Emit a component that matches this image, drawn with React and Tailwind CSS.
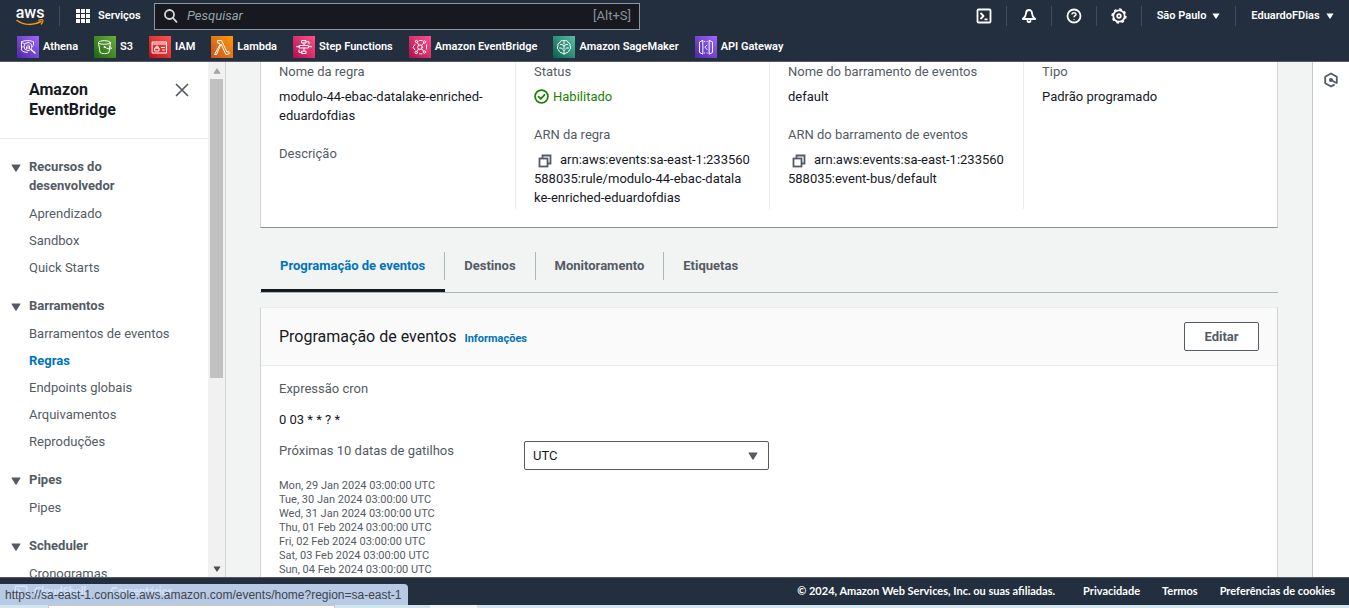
import React from "react";

const svgBase = {
  fill: "none",
  stroke: "currentColor",
  strokeWidth: 1,
  strokeLinecap: "round",
  strokeLinejoin: "round",
};

const services = [
  {
    name: "Athena",
    tile: "bg-linear-to-tr from-[#4d27a8] to-[#a166ff]",
    art: (
      <>
        <circle cx="11" cy="10.500" r="4" />
        <path d="M14 13.500l4 3.500" strokeWidth="1.600" />
        <path d="M9.500 11v1.500M11 9v3.500M12.500 10v2.500" />
        <path d="M4.500 6c1.500-2 10.500-2 12 0M4.500 6v8c1 1.700 3.500 2.500 6 2.300M16.500 6v3M4.500 6c.500.800 1.500 1.200 2.500 1.400M4.500 10c.500.700 1 .9 1.500 1" />
      </>
    ),
  },
  {
    name: "S3",
    tile: "bg-linear-to-tr from-[#1b660f] to-[#6cae3e]",
    art: (
      <>
        <ellipse cx="10.500" cy="6.500" rx="6" ry="1.800" />
        <path d="M4.500 6.500l1.500 10c1.500 1.500 7.500 1.500 9 0l1.500-10" />
        <path d="M10.500 11c3 2 6.500 2.500 7 1.500s-1.500-1.700-2.300-2" />
        <circle cx="10.500" cy="11" r="0.600" fill="currentColor" />
      </>
    ),
  },
  {
    name: "IAM",
    tile: "bg-linear-to-tr from-[#bd0816] to-[#ff5252]",
    art: (
      <>
        <rect x="3.500" y="6" width="14" height="11" />
        <path d="M3.500 8h14M12.500 11.500h3M13.500 14h2" />
        <rect x="6" y="12" width="4" height="3" />
        <path d="M7 12v-1a1 1 0 0 1 2 0v1" />
      </>
    ),
  },
  {
    name: "Lambda",
    tile: "bg-linear-to-tr from-[#c8511b] to-[#ff9900]",
    art: (
      <path d="M7 4.500h3.500l5.500 11.500 1.500-.5 1 2-3.500 1.200-5-10.700L5.500 18.500H3.500l5.500-10L8.300 7H7z" />
    ),
  },
  {
    name: "Step Functions",
    tile: "bg-linear-to-tr from-[#b0084d] to-[#ff4f8b]",
    art: (
      <>
        <rect x="9" y="4.500" width="4" height="2.500" />
        <rect x="6.500" y="9.500" width="9" height="2.500" />
        <rect x="9" y="15" width="4" height="2.500" />
        <path d="M11 7v2.500M11 12v3M9 16.300H6V14M13 5.800h3v2M3.500 10.700h3M15.500 10.700h3" />
      </>
    ),
  },
  {
    name: "Amazon EventBridge",
    tile: "bg-linear-to-tr from-[#b0084d] to-[#ff4f8b]",
    art: (
      <>
        <circle cx="11" cy="11.200" r="2.300" />
        <path d="M9.800 9L8.300 6.800M12.500 9.300l2-2M12.700 13l1.800 2M9.500 13.200L8 15.300" />
        <circle cx="7.500" cy="5.500" r="1.200" />
        <circle cx="15.500" cy="6" r="1.200" />
        <circle cx="15.500" cy="16" r="1.200" />
        <circle cx="7.300" cy="16.500" r="1.200" />
        <path d="M10.500 4.500h2.500M17.500 9v4M6 8.500l-2 2.700 2 2.800M10.500 17.800h2.500" />
      </>
    ),
  },
  {
    name: "Amazon SageMaker",
    tile: "bg-linear-to-tr from-[#055f4e] to-[#56c0a7]",
    art: (
      <>
        <path d="M11 4.500C8.500 3.800 7 5.300 7 6.500 5 7 4.500 8.700 5 10c-1 1.200-.800 3.200.700 4 .3 2 2 3 3.300 2.800.500.800 1.300 1.200 2 1.200s1.500-.4 2-1.200c1.300.2 3-.8 3.300-2.800 1.500-.8 1.700-2.800.7-4 .5-1.300 0-3-2-3.500 0-1.200-1.500-2.700-4-2z" />
        <path d="M11 4.500V8M11 14v4M7.500 8.500H9l2 1.500M14.500 8.500H13L11 10v2.500M6.500 12h2l2.500 2.500M15.500 12h-2l-1 1" />
      </>
    ),
  },
  {
    name: "API Gateway",
    tile: "bg-linear-to-tr from-[#4d27a8] to-[#a166ff]",
    art: (
      <>
        <path d="M7.500 4.500L4.500 6v10.500l3 1.500zM14.500 4.500l3 1.500v10.500l-3 1.500z" />
        <path d="M12 9l-2 2.200 2 2.300M9.500 5.500h.2M12 5.500h.2M9.500 17h.2M12 17h.2" />
      </>
    ),
  },
];

const navSections = [
  {
    title: "Recursos do desenvolvedor",
    items: ["Aprendizado", "Sandbox", "Quick Starts"],
  },
  {
    title: "Barramentos",
    items: [
      "Barramentos de eventos",
      "Regras",
      "Endpoints globais",
      "Arquivamentos",
      "Reproduções",
    ],
  },
  { title: "Pipes", items: ["Pipes"] },
  { title: "Scheduler", items: ["Cronogramas"] },
];

const triggerDates = [
  "Mon, 29 Jan 2024 03:00:00 UTC",
  "Tue, 30 Jan 2024 03:00:00 UTC",
  "Wed, 31 Jan 2024 03:00:00 UTC",
  "Thu, 01 Feb 2024 03:00:00 UTC",
  "Fri, 02 Feb 2024 03:00:00 UTC",
  "Sat, 03 Feb 2024 03:00:00 UTC",
  "Sun, 04 Feb 2024 03:00:00 UTC",
];

function Caret({ className }) {
  return (
    <svg viewBox="0 0 10 8" className={className} fill="currentColor" aria-hidden="true">
      <path d="M1 .5h8a.5.5 0 0 1 .4.8L5.500 7.400a.6.6 0 0 1-1 0L.6 1.300A.5.500 0 0 1 1 .5z" />
    </svg>
  );
}

function AwsLogo() {
  return (
    <a href="#" aria-label="AWS" className="flex w-7 flex-col items-center text-white">
      <span className="text-[16px] leading-[13px] font-medium">aws</span>
      <svg viewBox="0 0 28 7" className="h-[7px] w-7" fill="none" stroke="#f90" strokeLinecap="round">
        <path d="M1 1.500c7 5 17 5 24 1" strokeWidth="1.500" />
        <path d="M22.500 1.200c2-.6 4-.7 4.300-.2s-.2 2.500-1.500 4" strokeWidth="1.200" />
      </svg>
    </a>
  );
}

function TopButton({ label, children }) {
  return (
    <button type="button" aria-label={label} className="flex h-5 w-[45px] items-center justify-center border-r border-[#414d5c]">
      <svg viewBox="0 0 16 16" className="size-4" {...svgBase} strokeWidth="1.800">
        {children}
      </svg>
    </button>
  );
}

function Header() {
  return (
    <header className="shrink-0 border-b border-[#545b64] bg-[#232f3e] text-[11px] font-semibold text-white">
      <div className="flex h-8 items-center">
        <div className="flex h-5 items-center border-r border-[#414d5c] pr-[15px] pl-4">
          <AwsLogo />
        </div>
        <button type="button" className="ml-4 flex w-[78px] items-center gap-2">
          <svg viewBox="0 0 14 14" className="size-3.5 shrink-0" fill="currentColor" aria-hidden="true">
            {[0, 5, 10].map((y) =>
              [0, 5, 10].map((x) => <rect key={`${x}-${y}`} x={x} y={y} width="4" height="4" />)
            )}
          </svg>
          Serviços
        </button>
        <label className="flex h-[27px] w-[486px] items-center border border-[#8d9999] bg-[#16191f] px-2 font-normal">
          <svg viewBox="0 0 16 16" className="size-4 shrink-0 text-[#d5dbdb]" {...svgBase} strokeWidth="1.800">
            <circle cx="6.500" cy="6.500" r="4.500" />
            <path d="M10 10l3.500 3.800" />
          </svg>
          <input
            type="search"
            aria-label="Pesquisar"
            placeholder="Pesquisar"
            className="min-w-0 flex-1 bg-transparent px-2 text-[13px] outline-none placeholder:text-[#95a5a6] placeholder:italic"
          />
          <span className="text-[13px] text-[#879596]">[Alt+S]</span>
        </label>
        <div className="ml-auto flex items-center">
          <TopButton label="CloudShell">
            <rect x="1.500" y="1.500" width="13" height="13" rx="1" />
            <path d="M4.500 5l3 3-3 3M8.500 11.300h3" strokeLinecap="butt" />
          </TopButton>
          <TopButton label="Notificações">
            <path d="M8 2c-2 0-3 1.700-3 3.500 0 2.500-1 3.500-3.200 5.500h12.400C12 9 11 8 11 5.500 11 3.700 10 2 8 2z" />
            <path d="M6.500 13c.3 1.500 2.700 1.500 3 0" />
          </TopButton>
          <TopButton label="Ajuda">
            <circle cx="8" cy="8" r="6.500" />
            <path d="M6 6.500C6 3.900 10.200 4.300 10 6.500 9.900 7.800 8 7.700 8 9.300M8 11v.8" strokeWidth="1.500" strokeLinecap="butt" />
          </TopButton>
          <TopButton label="Configurações">
            <circle cx="8" cy="8" r="5.700" />
            <circle cx="8" cy="8" r="6.900" strokeWidth="1.500" strokeDasharray="2.700 2.700" strokeLinecap="butt" />
            <circle cx="8" cy="8" r="1.800" />
          </TopButton>
          <button type="button" className="flex h-5 w-[94px] items-center justify-center gap-1.5 border-r border-[#414d5c]">
            São Paulo
            <Caret className="h-1.5 w-2" />
          </button>
          <button type="button" className="flex h-5 w-[113px] items-center justify-center gap-1.5">
            EduardoFDias
            <Caret className="h-1.5 w-2" />
          </button>
        </div>
      </div>
      <nav aria-label="Favoritos" className="flex h-[29px] items-center gap-4 pt-px pl-[17px]">
        {services.map((s) => (
          <a key={s.name} href="#" className="flex items-center gap-1 whitespace-nowrap">
            <span className={`flex size-[22px] items-center justify-center ${s.tile}`}>
              <svg viewBox="0 0 22 22" className="size-[22px]" {...svgBase} aria-hidden="true">
                {s.art}
              </svg>
            </span>
            {s.name}
          </a>
        ))}
      </nav>
    </header>
  );
}

function Sidebar() {
  return (
    <aside className="flex w-[226px] shrink-0 border-r border-[#d0d4d4] bg-white">
      <div className="min-w-0 flex-1 overflow-hidden">
        <div className="flex items-start justify-between border-b border-[#eaeded] pt-[18px] pr-[18px] pb-[18px] pl-[29px]">
          <h2 className="w-28 text-[16px] leading-5 font-bold text-[#16191f]">Amazon EventBridge</h2>
          <button type="button" aria-label="Fechar" className="mt-0.5 text-[#545b64]">
            <svg viewBox="0 0 16 16" className="size-4" {...svgBase} strokeWidth="1.700">
              <path d="M2.500 2.500l11 11M13.500 2.500l-11 11" />
            </svg>
          </button>
        </div>
        <nav aria-label="Amazon EventBridge" className="flex flex-col gap-[19px] pt-[18px] text-[13px] leading-[19px] text-[#545b64]">
          {navSections.map((section) => (
            <section key={section.title}>
              <button type="button" className="flex w-full items-start gap-2 pr-14 pl-[11px] text-left font-bold">
                <Caret className="mt-[7px] h-2 w-2.5 shrink-0" />
                {section.title}
              </button>
              <ul className="mt-[9px] flex flex-col gap-2 pl-[29px]">
                {section.items.map((item) => (
                  <li key={item}>
                    <a href="#" className={item === "Regras" ? "font-bold text-[#0073bb]" : ""}>
                      {item}
                    </a>
                  </li>
                ))}
              </ul>
            </section>
          ))}
        </nav>
      </div>
      <div className="flex w-[17px] shrink-0 flex-col items-center bg-[#f1f1f1]" aria-hidden="true">
        <div className="flex h-[17px] items-center">
          <Caret className="h-1.5 w-2 rotate-180 text-[#a3a3a3]" />
        </div>
        <div className="h-[299px] w-[13px] bg-[#c1c1c1]" />
        <div className="mt-auto flex h-[17px] items-center">
          <Caret className="h-1.5 w-2 text-[#505050]" />
        </div>
      </div>
    </aside>
  );
}

function Field({ label, children }) {
  return (
    <div>
      <dt className="text-[#545b64]">{label}</dt>
      <dd className="mt-1.5 wrap-anywhere text-[#16191f]">{children}</dd>
    </div>
  );
}

function CopyButton() {
  return (
    <button type="button" aria-label="Copiar" className="mr-2 ml-1 inline-block align-middle text-[#545b64]">
      <svg viewBox="0 0 14 14" className="size-3.5" {...svgBase} strokeWidth="1.800" strokeLinejoin="miter">
        <rect x="1.500" y="4.500" width="8" height="8" />
        <path d="M4.500 4V1.500h8v8H10" />
      </svg>
    </button>
  );
}

function RuleDetails() {
  return (
    <section className="border-x border-b border-x-[#d0d4d4] border-b-[#879596] bg-white pb-[18px]">
      <dl className="grid grid-cols-4 text-[13px] leading-[19px]">
        <div className="flex min-h-[147px] flex-col gap-[19px] px-[18px]">
          <Field label="Nome da regra">modulo-44-ebac-datalake-enriched-eduardofdias</Field>
          <Field label="Descrição" />
        </div>
        <div className="flex flex-col gap-[19px] border-l border-[#eaeded] px-[18px]">
          <Field label="Status">
            <span className="flex items-center gap-1 text-[#1d8102]">
              <svg viewBox="0 0 16 16" className="size-[15px]" {...svgBase} strokeWidth="1.900">
                <circle cx="8" cy="8" r="6.800" />
                <path d="M4.800 8.200l2.400 2.300 4-4.300" />
              </svg>
              Habilitado
            </span>
          </Field>
          <Field label="ARN da regra">
            <CopyButton />
            arn:aws:events:sa-east-1:233560<wbr />588035:rule/modulo-44-ebac-datala<wbr />ke-enriched-eduardofdias
          </Field>
        </div>
        <div className="flex flex-col gap-[19px] border-l border-[#eaeded] px-[18px]">
          <Field label="Nome do barramento de eventos">default</Field>
          <Field label="ARN do barramento de eventos">
            <CopyButton />
            arn:aws:events:sa-east-1:233560<wbr />588035:event-bus/default
          </Field>
        </div>
        <div className="flex flex-col gap-[19px] border-l border-[#eaeded] px-[18px]">
          <Field label="Tipo">Padrão programado</Field>
        </div>
      </dl>
    </section>
  );
}

function Tabs() {
  const tabs = ["Programação de eventos", "Destinos", "Monitoramento", "Etiquetas"];
  return (
    <div role="tablist" className="mt-6 flex border-b border-[#aab7b8] pl-px text-[13px] font-bold">
      {tabs.map((tab, i) => (
        <button
          key={tab}
          type="button"
          role="tab"
          aria-selected={i === 0}
          className={
            i === 0
              ? "border-b-[3px] border-[#16191f] pb-[9px] text-[#0073bb]"
              : "border-b-[3px] border-transparent pb-[9px] text-[#545b64]"
          }
        >
          <span
            className={
              i === tabs.length - 1
                ? "flex h-7 items-center px-[19px]"
                : "flex h-7 items-center border-r border-[#aab7b8] px-[19px]"
            }
          >
            {tab}
          </span>
        </button>
      ))}
    </div>
  );
}

function Schedule() {
  return (
    <section className="mt-3.5 flex-1 border border-b-0 border-[#d0d4d4] border-t-[#eaeded] bg-white">
      <div className="flex h-[58px] items-center border-b border-[#eaeded] bg-[#fafafa] px-[18px]">
        <div className="flex items-baseline gap-2">
          <h2 className="text-[16px] text-[#16191f]">Programação de eventos</h2>
          <a href="#" className="text-[11px] font-bold text-[#0073bb]">
            Informações
          </a>
        </div>
        <button
          type="button"
          className="ml-auto h-[29px] w-[75px] rounded-xs border border-[#545b64] bg-white text-[13px] font-bold text-[#545b64]"
        >
          Editar
        </button>
      </div>
      <div className="px-[18px] pt-[13px] text-[13px] leading-[19px] text-[#545b64]">
        <p>Expressão cron</p>
        <p className="mt-3 text-[#16191f]">0 03 * * ? *</p>
        <div className="mt-3 grid grid-cols-4">
          <label htmlFor="timezone">Próximas 10 datas de gatilhos</label>
          <div className="flex h-[29px] items-center rounded-xs border border-[#545b64] bg-white pr-2.5">
            <select id="timezone" className="h-full min-w-0 flex-1 appearance-none px-2 text-[#16191f] outline-none">
              <option>UTC</option>
              <option>Local</option>
            </select>
            <Caret className="h-2 w-2.5 shrink-0" />
          </div>
        </div>
        <ul className="mt-[9px] text-[11px] leading-[14px]">
          {triggerDates.map((d) => (
            <li key={d}>{d}</li>
          ))}
        </ul>
      </div>
    </section>
  );
}

function Footer() {
  return (
    <footer className="relative flex h-7 shrink-0 items-center border-t border-[#545b64] bg-[#232f3e] pr-3.5 font-[Lato,sans-serif] text-[11px] font-bold text-white">
      <button type="button" className="ml-3.5 flex items-center gap-1.5">
        <svg viewBox="0 0 16 16" className="size-3.5" {...svgBase} strokeWidth="1.700">
          <rect x="1.500" y="1.500" width="13" height="13" rx="1" />
          <path d="M4.500 5l3 3-3 3" />
        </svg>
        CloudShell
      </button>
      <button type="button" className="ml-6">
        Comentários
      </button>
      <div className="ml-auto flex gap-x-[22px]">
        <span className="mr-1.5">© 2024, Amazon Web Services, Inc. ou suas afiliadas.</span>
        <a href="#">Privacidade</a>
        <a href="#">Termos</a>
        <a href="#">Preferências de cookies</a>
      </div>
      <div className="absolute bottom-0 left-0 flex h-[21px] items-center rounded-tr-sm bg-[#cfe0fc]/87 pr-1.5 pl-[5px] font-['Liberation_Sans',sans-serif] text-[12px] font-normal text-[#3c4450]">
        https://sa-east-1.console.aws.amazon.com/events/home?region=sa-east-1
      </div>
    </footer>
  );
}

export default function App() {
  return (
    <div className="flex h-screen flex-col overflow-hidden bg-[#f2f3f3] font-[Roboto,sans-serif]">
      <Header />
      <div className="flex min-h-0 flex-1">
        <Sidebar />
        <main className="flex min-w-0 flex-1 flex-col overflow-hidden px-[34px]">
          <RuleDetails />
          <Tabs />
          <Schedule />
        </main>
        <aside className="flex w-[37px] shrink-0 justify-center border-l border-[#c4cacc] bg-white pt-2.5">
          <button type="button" aria-label="Tempo" className="h-4 text-[#545b64]">
            <svg viewBox="0 0 16 16" className="size-4" {...svgBase} strokeWidth="1.800">
              <path d="M13.800 10.800V4.700L8 1.500 2.200 4.700v6.600L8 14.500l3-1.600" />
              <path d="M8 8l5 2.800" />
              <circle cx="8" cy="8" r="1.200" fill="currentColor" />
            </svg>
          </button>
        </aside>
      </div>
      <Footer />
      <div className="flex h-[3px] shrink-0 bg-[#d3e5ee]" aria-hidden="true">
        <div className="ml-12 w-[287px] border border-b-0 border-[#c9c9c9] bg-white" />
        <div className="ml-[95px] w-[47px] bg-[#f4f8fb]" />
      </div>
    </div>
  );
}
